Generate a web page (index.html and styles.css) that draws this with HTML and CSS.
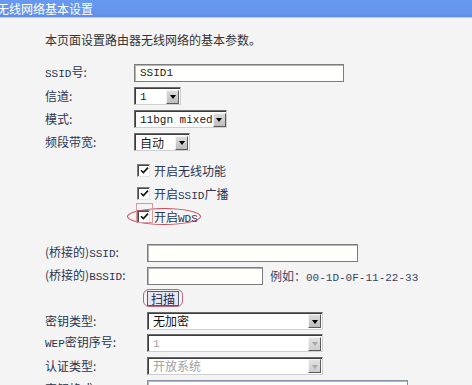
FILE: index.html
```html
<!DOCTYPE html>
<html lang="zh">
<head>
<meta charset="utf-8">
<title>无线网络基本设置</title>
<link rel="stylesheet" href="styles.css">
</head>
<body>
<div class="title">无线网络基本设置</div>
<p class="desc">本页面设置路由器无线网络的基本参数。</p>

<div class="grid g1">
  <div class="lbl"><span class="en">SSID</span>号:</div>
  <div class="inp w210"><span class="en">SSID1</span></div>

  <div class="lbl">信道:</div>
  <div class="sel w47"><span class="val en">1</span><span class="arr"></span></div>

  <div class="lbl">模式:</div>
  <div class="sel w93"><span class="val en">11bgn mixed</span><span class="arr"></span></div>

  <div class="lbl">频段带宽:</div>
  <div class="sel w56"><span class="val">自动</span><span class="arr"></span></div>
</div>

<div class="checks">
  <div class="chk"><span class="box"><svg viewBox="0 0 9 9" width="9" height="9"><path d="M1 4.2 L3.4 6.6 L8 1.6" fill="none" stroke="#111" stroke-width="1.6"/></svg></span><span>开启无线功能</span></div>
  <div class="chk"><span class="box"><svg viewBox="0 0 9 9" width="9" height="9"><path d="M1 4.2 L3.4 6.6 L8 1.6" fill="none" stroke="#111" stroke-width="1.6"/></svg></span><span>开启<span class="en">SSID</span>广播</span></div>
  <div class="chk marked"><span class="box"><svg viewBox="0 0 9 9" width="9" height="9"><path d="M1 4.2 L3.4 6.6 L8 1.6" fill="none" stroke="#111" stroke-width="1.6"/></svg></span><span>开启<span class="en">WDS</span></span><span class="ring"></span><span class="focus"></span></div>
</div>

<div class="grid g2">
  <div class="lbl">(桥接的)<span class="en">SSID</span>:</div>
  <div class="inp w211"></div>

  <div class="lbl">(桥接的)<span class="en">BSSID</span>:</div>
  <div class="cell">
    <div class="inp w116"></div>
    <span class="hint">例如：<span class="en">00-1D-0F-11-22-33</span></span>
  </div>

  <div class="lbl"></div>
  <div class="cell"><span class="scan"><span class="btn">扫描</span></span></div>

  <div class="lbl">密钥类型:</div>
  <div class="sel w176"><span class="val dark">无加密</span><span class="arr"></span></div>

  <div class="lbl"><span class="en">WEP</span>密钥序号:</div>
  <div class="sel w176 dis"><span class="val en">1</span><span class="arr"></span></div>

  <div class="lbl">认证类型:</div>
  <div class="sel w176 dis"><span class="val">开放系统</span><span class="arr"></span></div>

  <div class="lbl">密钥格式:</div>
  <div class="inp w261 blue"></div>
</div>
</body>
</html>
```
FILE: styles.css
```css
* { box-sizing: border-box; }
html, body {
  margin: 0;
  height: 385px;
  overflow: hidden;
  background: #f4f4f4;
}
body {
  font-family: "Noto Sans CJK SC", sans-serif;
  font-size: 12px;
  color: #2b3550;
}
.en {
  font-family: "Liberation Mono", monospace;
  font-size: 11px;
}
.title {
  height: 18px;
  line-height: 17px;
  background: linear-gradient(#6699ef, #6494ec 80%, #5d8ce2);
  border-bottom: 1px solid #b8cdf0;
  color: #fff;
  text-indent: -3px;
  white-space: nowrap;
}
.desc {
  margin: 15px 0 0 45px;
  line-height: 14px;
  color: #333;
}
.grid {
  display: grid;
  padding-left: 45px;
  grid-auto-rows: 18px;
  align-items: center;
}
.g1 {
  margin-top: 17px;
  grid-template-columns: 89px 1fr;
  row-gap: 5px;
}
.g2 {
  margin-top: 19px;
  grid-template-columns: 102px 1fr;
  row-gap: 4.6px;
}
.lbl {
  white-space: nowrap;
  line-height: 14px;
}
.cell {
  display: flex;
  align-items: center;
  height: 18px;
}
.inp {
  height: 18px;
  border: 1px solid #7c7c7c;
  box-shadow: inset 1px 1px 0 #b5b5b5;
  background: #fffffb;
  padding-left: 5px;
  display: flex;
  align-items: center;
  color: #222;
}
.inp.blue { border-color: #8391ab; }
.w210 { width: 210px; }
.w211 { width: 211px; }
.w116 { width: 116px; }
.w261 { width: 261px; }
.w47 { width: 47px; }
.w93 { width: 93px; }
.w56 { width: 56px; }
.w176 { width: 176px; }
.hint {
  margin-left: 7px;
  white-space: nowrap;
  color: #3a4560;
}
.sel {
  height: 18px;
  display: flex;
  align-items: center;
  border: 1px solid;
  border-color: #6a6a6a #cfcfcf #cfcfcf #6a6a6a;
  box-shadow: inset 1px 1px 0 #3c3c3c;
  background: #fff;
  padding: 1px 1px 0 2px;
  color: #1a1a1a;
}
.sel .val {
  flex: 1;
  padding-left: 3px;
  white-space: nowrap;
  line-height: 14px;
}
.sel .arr {
  width: 13px;
  height: 14px;
  flex: none;
  background: linear-gradient(#dcdcdc, #bdbdbd);
  border: 1px solid;
  border-color: #f4f4f4 #5a5a5a #5a5a5a #f4f4f4;
  display: flex;
  align-items: center;
  justify-content: center;
}
.sel .arr::after {
  content: "";
  border-left: 3.5px solid transparent;
  border-right: 3.5px solid transparent;
  border-top: 4px solid #000;
  margin-top: 1px;
}
.sel.dis { color: #a0a0a0; }
.sel.dis .arr { background: linear-gradient(#e2e2e2, #cdcdcd); }
.sel.dis .arr::after { border-top-color: #a8a8a8; }
.checks {
  margin-top: 10px;
  padding-left: 137px;
  display: flex;
  flex-direction: column;
  gap: 5px;
}
.chk {
  position: relative;
  height: 18px;
  display: flex;
  align-items: center;
  gap: 4px;
  white-space: nowrap;
}
.box {
  width: 13px;
  height: 13px;
  border: 1px solid;
  border-color: #7a7a7a #e4e4e4 #e4e4e4 #7a7a7a;
  box-shadow: inset 1px 1px 0 #4a4a4a;
  background: #fff;
  display: flex;
  align-items: center;
  justify-content: center;
  padding: 1px 0 0 1px;
}
.ring {
  position: absolute;
  left: -10px;
  top: 1px;
  width: 74px;
  height: 17px;
  border: 1px solid #c24a5a;
  border-radius: 50%;
}
.focus {
  position: absolute;
  left: -1px;
  top: -4px;
  width: 17px;
  height: 20px;
  border: 1px solid #d89aa2;
}
.scan {
  margin-left: -4px;
  width: 40px;
  height: 18px;
  border: 1.5px solid #b8687a;
  border-radius: 6px;
  display: flex;
  align-items: center;
  justify-content: center;
}
.btn {
  border: 1px solid #5a5a66;
  background: #e6e6f4;
  padding: 0 3px;
  line-height: 13px;
  color: #1a2848;
}
.dark { color: #111; }
```
